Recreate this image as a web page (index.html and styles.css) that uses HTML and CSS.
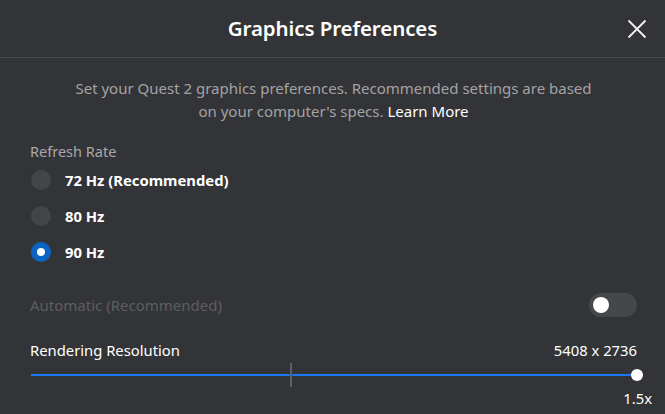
FILE: index.html
```html
<!DOCTYPE html>
<html>
<head>
<meta charset="utf-8">
<link rel="stylesheet" href="styles.css">
</head>
<body>
<div class="dialog">
  <header class="header">
    <div class="spacer"></div>
    <h1 class="title">Graphics Preferences</h1>
    <div class="close-wrap">
      <svg class="close" width="20" height="20" viewBox="0 0 20 20"><path d="M1.5 1.5 L18.5 18.5 M18.5 1.5 L1.5 18.5" stroke="#f2f2f2" stroke-width="1.8" fill="none"/></svg>
    </div>
  </header>
  <main class="content">
    <p class="desc">Set your Quest 2 graphics preferences. Recommended settings are based<br>on your computer's specs. <span class="link">Learn More</span></p>
    <div class="section-label">Refresh Rate</div>
    <div class="radios">
      <div class="radio-row"><span class="radio"></span><span class="radio-label">72 Hz (Recommended)</span></div>
      <div class="radio-row"><span class="radio"></span><span class="radio-label">80 Hz</span></div>
      <div class="radio-row"><span class="radio checked"></span><span class="radio-label">90 Hz</span></div>
    </div>
    <div class="auto-row">
      <span class="auto-label">Automatic (Recommended)</span>
      <span class="toggle"><span class="knob"></span></span>
    </div>
    <div class="res-row">
      <span class="res-label">Rendering Resolution</span>
      <span class="res-value">5408 x 2736</span>
    </div>
    <div class="slider">
      <div class="track"></div>
      <div class="tick"></div>
      <div class="thumb"></div>
    </div>
    <div class="scale">1.5x</div>
  </main>
</div>
</body>
</html>
```
FILE: styles.css
```css
html, body {
  margin: 0;
  padding: 0;
  background: #333437;
}
body {
  font-family: "Noto Sans", "Open Sans", sans-serif;
  color: #ffffff;
  width: 665px;
  height: 414px;
  overflow: hidden;
}
.dialog {
  display: flex;
  flex-direction: column;
}
.header {
  height: 58px;
  box-sizing: border-box;
  border-bottom: 1px solid #4a4b4e;
  display: grid;
  grid-template-columns: 1fr auto 1fr;
  align-items: center;
}
.title {
  margin: 0;
  font-size: 20.5px;
  font-weight: 600;
  color: #ffffff;
  letter-spacing: -0.1px;
  padding-bottom: 2px;
}
.close-wrap {
  display: flex;
  justify-content: flex-end;
  padding-right: 18px;
}
.close {
  display: block;
}
.content {
  padding: 0 28px 0 30px;
  display: flex;
  flex-direction: column;
}
.desc {
  margin: 19px 0 0;
  text-align: center;
  font-size: 15px;
  line-height: 23px;
  color: #a3a3a5;
}
.link {
  color: #ffffff;
}
.section-label {
  margin-top: 18px;
  font-size: 14.5px;
  color: #a8a8aa;
  line-height: 20px;
}
.radios {
  display: flex;
  flex-direction: column;
  gap: 16px;
  margin-top: 9px;
}
.radio-row {
  display: flex;
  align-items: center;
  gap: 14px;
  height: 20px;
}
.radio {
  width: 20px;
  height: 20px;
  border-radius: 50%;
  background: #444548;
  margin-left: 1px;
  display: flex;
  align-items: center;
  justify-content: center;
}
.radio.checked {
  background: #0b64c5;
}
.radio.checked::after {
  content: "";
  width: 8px;
  height: 8px;
  border-radius: 50%;
  background: #ffffff;
}
.radio-label {
  font-size: 14.8px;
  font-weight: 700;
  color: #ffffff;
}
.auto-row {
  margin-top: 31px;
  display: flex;
  justify-content: space-between;
  align-items: center;
  height: 24px;
}
.auto-label {
  font-size: 15px;
  color: #5d5e61;
}
.toggle {
  width: 48px;
  height: 24px;
  border-radius: 12px;
  background: #46474a;
  display: flex;
  align-items: center;
  padding-left: 4px;
  box-sizing: border-box;
}
.knob {
  width: 16px;
  height: 16px;
  border-radius: 50%;
  background: #ffffff;
}
.res-row {
  margin-top: 23px;
  display: flex;
  justify-content: space-between;
  font-size: 14.8px;
  line-height: 20px;
  color: #ffffff;
}
.slider {
  position: relative;
  height: 24px;
  margin-top: 3px;
  margin-left: 1px;
}
.track {
  position: absolute;
  left: 0;
  right: 0;
  top: 11px;
  height: 2px;
  background: #1a78f0;
}
.tick {
  position: absolute;
  left: 259px;
  top: 0;
  width: 2px;
  height: 24px;
  background: #5e5f62;
}
.thumb {
  position: absolute;
  right: -6px;
  top: 6px;
  width: 12px;
  height: 12px;
  border-radius: 50%;
  background: #ffffff;
}
.scale {
  align-self: flex-end;
  margin-right: -15px;
  margin-top: 1px;
  font-size: 14.8px;
  line-height: 20px;
}
```
